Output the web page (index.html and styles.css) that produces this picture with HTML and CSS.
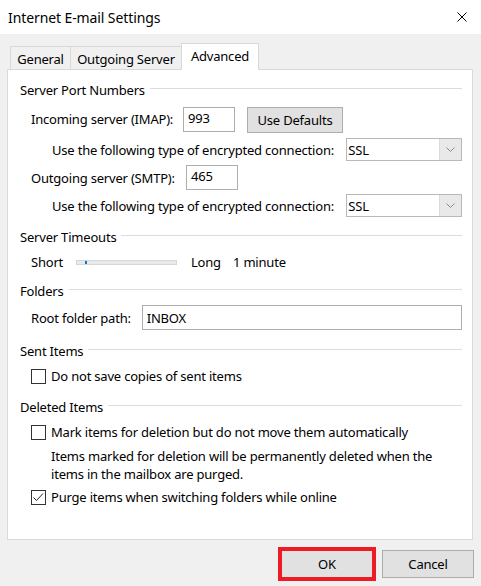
FILE: index.html
```html
<!DOCTYPE html>
<html>
<head>
<meta charset="utf-8">
<link rel="stylesheet" href="styles.css">
</head>
<body>
<div class="titlebar">
  <span class="title">Internet E-mail Settings</span>
  <svg class="close" width="10" height="10" viewBox="0 0 10 10"><path d="M0.5 0.5 L9.5 9.5 M9.5 0.5 L0.5 9.5" stroke="#000" stroke-width="1" fill="none"/></svg>
</div>
<div class="tabs">
  <div class="tab t-general">General</div>
  <div class="tab t-outgoing">Outgoing Server</div>
  <div class="tab t-advanced active">Advanced</div>
</div>
<div class="panel">
  <div class="group-head g1"><span>Server Port Numbers</span></div>
  <div class="row r-imap">
    <span class="lbl-imap">Incoming server (IMAP):</span>
    <input class="field f-port" value="993">
    <button class="btn btn-defaults">Use Defaults</button>
  </div>
  <div class="row r-enc r-enc1">
    <span class="lbl-enc">Use the following type of encrypted connection:</span>
    <div class="combo"><span class="combo-val">SSL</span><span class="combo-btn"><svg width="9" height="5" viewBox="0 0 9 5"><path d="M0.5 0.5 L4.5 4.5 L8.5 0.5" stroke="#8a8a8a" fill="none"/></svg></span></div>
  </div>
  <div class="row r-smtp">
    <span class="lbl-smtp">Outgoing server (SMTP):</span>
    <input class="field f-port" value="465">
  </div>
  <div class="row r-enc r-enc2">
    <span class="lbl-enc">Use the following type of encrypted connection:</span>
    <div class="combo"><span class="combo-val">SSL</span><span class="combo-btn"><svg width="9" height="5" viewBox="0 0 9 5"><path d="M0.5 0.5 L4.5 4.5 L8.5 0.5" stroke="#8a8a8a" fill="none"/></svg></span></div>
  </div>

  <div class="group-head g2"><span>Server Timeouts</span></div>
  <div class="row r-slider">
    <span class="lbl-short">Short</span>
    <div class="track"><div class="thumb"></div></div>
    <span class="lbl-long">Long</span>
    <span>1 minute</span>
  </div>

  <div class="group-head g3"><span>Folders</span></div>
  <div class="row r-root">
    <span class="lbl-root">Root folder path:</span>
    <input class="field f-root" value="INBOX">
  </div>

  <div class="group-head g4"><span>Sent Items</span></div>
  <div class="row r-check r-c1">
    <span class="cb"></span><span>Do not save copies of sent items</span>
  </div>

  <div class="group-head g5"><span>Deleted Items</span></div>
  <div class="row r-check r-c2">
    <span class="cb"></span><span>Mark items for deletion but do not move them automatically</span>
  </div>
  <p class="desc">Items marked for deletion will be permanently deleted when the items in the mailbox are purged.</p>
  <div class="row r-check r-c3">
    <span class="cb checked"><svg width="13" height="13" viewBox="0 0 13 13"><path d="M1.5 6.5 L4.5 9.5 L11 2.5" stroke="#222" stroke-width="1" fill="none"/></svg></span><span>Purge items when switching folders while online</span>
  </div>
</div>
<div class="footer">
  <button class="btn btn-dlg btn-ok">OK</button>
  <button class="btn btn-dlg">Cancel</button>
</div>
</body>
</html>
```

FILE: styles.css
```css
* { box-sizing: border-box; }
html, body { margin: 0; padding: 0; }
body {
  width: 481px;
  height: 586px;
  overflow: hidden;
  background: #f0f0f0;
  font-family: "Noto Sans", "Open Sans", sans-serif;
  font-size: 13px;
  letter-spacing: -0.2px;
  color: #000;
}
.titlebar {
  height: 34px;
  background: #fff;
  display: flex;
  align-items: center;
  justify-content: space-between;
  padding: 0 14px 0 8px;
}
.title { font-size: 14px; letter-spacing: -0.1px; }
.close { display: block; }

.tabs {
  display: flex;
  align-items: flex-end;
  height: 35px;
  padding-top: 9px;
  padding-left: 10px;
}
.tab {
  height: 23px;
  border: 1px solid #d9d9d9;
  border-bottom: none;
  background: #f0f0f0;
  display: flex;
  align-items: center;
  justify-content: center;
  padding-top: 2px;
}
.t-general { width: 61px; }
.t-outgoing { width: 112px; margin-left: -1px; }
.t-advanced {
  width: 78px;
  margin-left: -1px;
  height: 27px;
  margin-bottom: -1px;
  background: #fff;
  position: relative;
  z-index: 1;
  padding-top: 0;
  padding-bottom: 2px;
}

.panel {
  margin-left: 7px;
  width: 466px;
  height: 471px;
  border: 1px solid #d9d9d9;
  background: #fff;
  padding: 0 10px 0 12px;
}

.group-head {
  display: flex;
  align-items: center;
  height: 18px;
}
.group-head::after {
  content: "";
  flex: 1;
  border-top: 1px solid #dcdcdc;
  margin-left: 5px;
  margin-bottom: 3px;
}
.g1 { margin-top: 11px; }
.g2 { margin-top: 11px; }
.g3 { margin-top: 11px; }
.g4 { margin-top: 12px; }
.g5 { margin-top: 13px; }

.row { display: flex; align-items: center; }

.r-imap { margin-top: 8px; height: 26px; padding-left: 11px; align-items: flex-start; }
.r-imap .lbl-imap { width: 152px; line-height: 25px; }
.r-smtp { margin-top: 4px; height: 25px; padding-left: 11px; }
.r-smtp .lbl-smtp { width: 155px; }
.r-enc { height: 23px; padding-left: 32px; }
.r-enc1 { margin-top: 5px; }
.r-enc2 { margin-top: 4px; }
.lbl-enc { width: 295px; }

.field {
  font: inherit;
  letter-spacing: inherit;
  color: #000;
  height: 25px;
  border: 1px solid #adadad;
  background: #fff;
  padding: 0 4px;
  margin: 0;
  outline: none;
}
.f-port { width: 52px; padding-bottom: 3px; }
.f-root { width: 321px; }

.btn {
  font: inherit;
  letter-spacing: inherit;
  color: #000;
  background: #e1e1e1;
  border: 1px solid #adadad;
  margin: 0;
  padding: 0;
}
.btn-defaults { margin-left: 12px; width: 96px; height: 26px; }

.combo {
  width: 116px;
  height: 23px;
  border: 1px solid #b8b8b8;
  display: flex;
  background: #fff;
}
.combo-val { flex: 1; padding-left: 1px; display: flex; align-items: center; }
.combo-btn {
  width: 22px;
  background: #e9e9e9;
  border-left: 1px solid #dadada;
  display: flex;
  align-items: center;
  justify-content: center;
}

.r-slider { margin-top: 7px; height: 18px; padding-left: 11px; }
.lbl-short { width: 45px; }
.track {
  width: 101px;
  height: 5px;
  background: #e7eaea;
  border: 1px solid #d6d6d6;
  position: relative;
  margin-right: 14px;
}
.thumb {
  position: absolute;
  left: 8px;
  top: 0;
  width: 2px;
  height: 3px;
  background: #0078d7;
}
.lbl-long { width: 42px; }

.r-root { margin-top: 5px; height: 25px; padding-left: 11px; }
.lbl-root { width: 111px; }

.r-check { height: 18px; padding-left: 11px; }
.r-c1 { margin-top: 7px; }
.r-c2 { margin-top: 7px; }
.r-c3 { margin-top: 5px; }
.cb {
  width: 15px;
  height: 15px;
  border: 1px solid #333;
  margin-right: 5px;
  background: #fff;
  display: flex;
  align-items: center;
  justify-content: center;
}
.cb svg { display: block; }

.desc {
  margin: 6px 0 0 0;
  padding-left: 31px;
  line-height: 18px;
  width: 440px;
}

.footer {
  display: flex;
  justify-content: flex-end;
  gap: 9px;
  margin-top: 10px;
  padding-right: 7px;
}
.btn-dlg { width: 92px; height: 28px; }
.btn-ok { outline: 4px solid #ed1c24; outline-offset: -1px; }
```
